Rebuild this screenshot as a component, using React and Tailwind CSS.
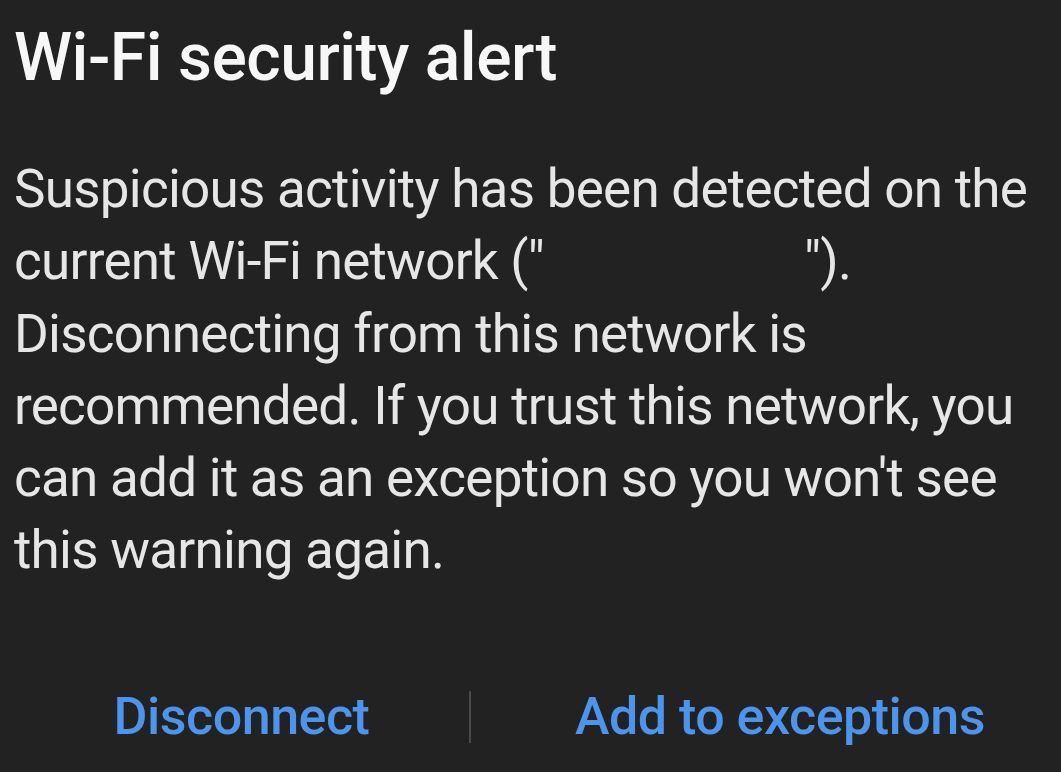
export default function App() {
  return (
    <div
      className="flex h-[772px] w-[1061px] flex-col bg-[#222222] pl-[14px] pr-[20px] text-[#e6e6e6]"
      style={{ fontFamily: "Roboto, 'Noto Sans', sans-serif" }}
    >
      <h1 className="pt-[18px] text-[66px] font-medium leading-[80px] tracking-[-0.5px] text-[#f7f7f7]">
        Wi-Fi security alert
      </h1>
      <p className="mt-[55px] whitespace-nowrap text-[53px] leading-[72.3px] tracking-[-0.75px]">
        Suspicious activity has been detected on the
        <br />
        current Wi-Fi network ("<span className="inline-block w-[260px]" />").
        <br />
        Disconnecting from this network is
        <br />
        recommended. If you trust this network, you
        <br />
        can add it as an exception so you won't see
        <br />
        this warning again.
      </p>
      <div className="mt-auto mb-[16px] flex items-center">
        <button className="w-[455px] text-center text-[52px] font-medium tracking-[-0.5px] text-[#4d94ec]">
          Disconnect
        </button>
        <div className="h-[52px] w-[2px] bg-[#4a4a4a]" />
        <button className="flex-1 pl-[48px] text-center text-[52px] font-medium tracking-[-0.5px] text-[#4d94ec]">
          Add to exceptions
        </button>
      </div>
    </div>
  );
}
